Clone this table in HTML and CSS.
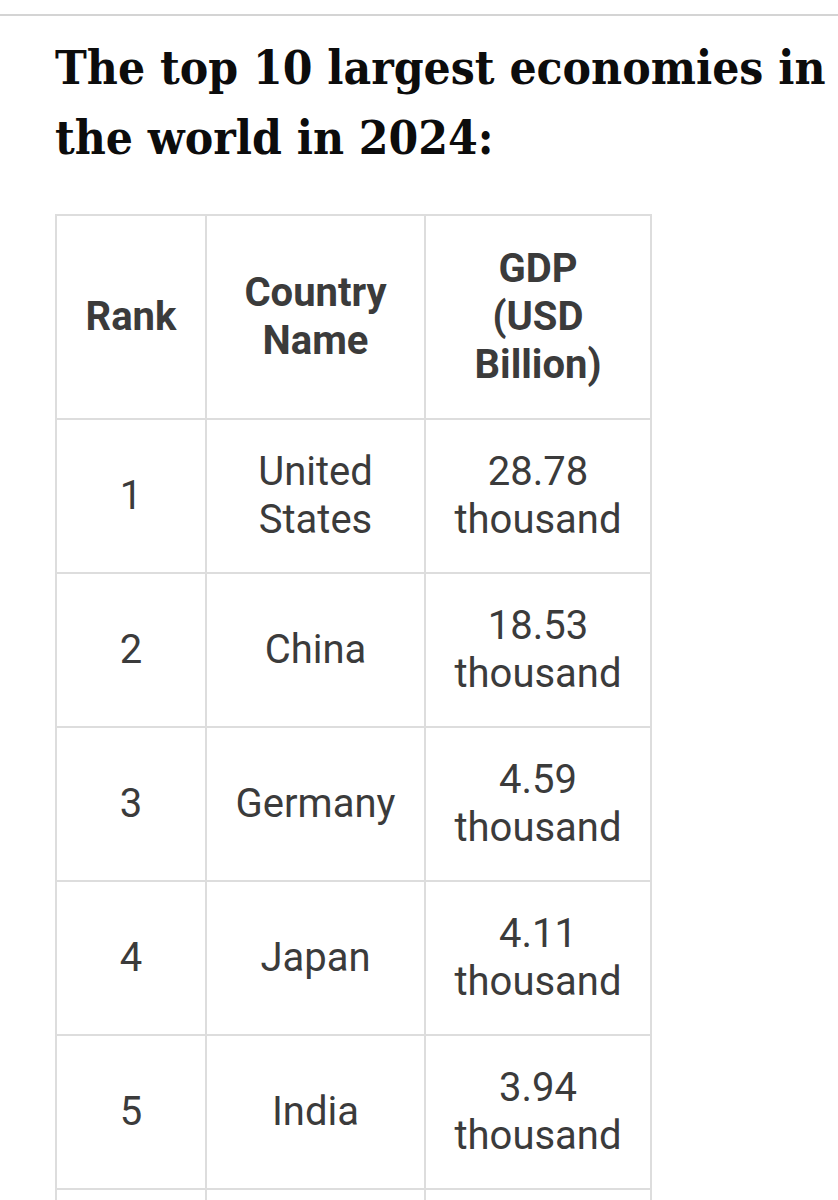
FILE: index.html
```html
<!DOCTYPE html>
<html>
<head>
<meta charset="utf-8">
<link rel="stylesheet" href="styles.css">
</head>
<body>
<div class="rule"></div>
<main class="content">
  <h2 class="title">The top 10 largest economies in the world in 2024:</h2>
  <table class="gdp">
    <colgroup>
      <col class="c1"><col class="c2"><col class="c3">
    </colgroup>
    <thead>
      <tr><th>Rank</th><th>Country<br>Name</th><th>GDP<br>(USD<br>Billion)</th></tr>
    </thead>
    <tbody>
      <tr><td>1</td><td>United<br>States</td><td>28.78<br>thousand</td></tr>
      <tr><td>2</td><td>China</td><td>18.53<br>thousand</td></tr>
      <tr><td>3</td><td>Germany</td><td>4.59<br>thousand</td></tr>
      <tr><td>4</td><td>Japan</td><td>4.11<br>thousand</td></tr>
      <tr><td>5</td><td>India</td><td>3.94<br>thousand</td></tr>
      <tr><td>6</td><td>United<br>Kingdom</td><td>3.50<br>thousand</td></tr>
    </tbody>
  </table>
</main>
</body>
</html>
```
FILE: styles.css
```css
html, body {
  margin: 0;
  padding: 0;
  background: #ffffff;
}
body {
  overflow: hidden;
  height: 1200px;
}
.rule {
  margin-top: 14px;
  height: 2px;
  background: #d4d4d4;
}
.content {
  padding: 0 0 0 55px;
}
.title {
  margin: 16px 0 0 0;
  font-family: "DejaVu Serif Condensed", "DejaVu Serif", serif;
  font-weight: bold;
  font-size: 47.5px;
  line-height: 70px;
  color: #0c0c0c;
  width: 790px;
}
.gdp {
  margin-top: 42px;
  border-collapse: collapse;
  font-family: Roboto, "Liberation Sans", sans-serif;
  font-size: 40px;
  line-height: 48px;
  color: #3b3b3b;
  text-align: center;
  table-layout: fixed;
  width: 595px;
}
.c1 { width: 150px; }
.c2 { width: 219px; }
.c3 { width: 226px; }
.gdp th, .gdp td {
  border: 2px solid #dddddd;
  padding: 28px 6px;
  vertical-align: middle;
}
.gdp th {
  font-weight: bold;
  padding: 29px 6px;
}
```
